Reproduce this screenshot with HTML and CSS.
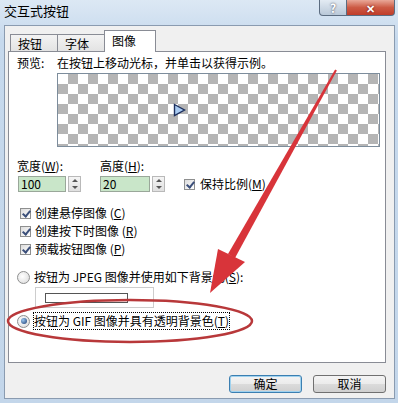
FILE: index.html
```html
<!DOCTYPE html>
<html lang="zh-CN">
<head>
    <meta charset="UTF-8">
    <title>交互式按钮</title>
    <link rel="stylesheet" href="styles.css">
</head>
<body>

<div class="window">
    <div class="titlebar">
        <span class="title">交互式按钮</span>
        <div class="caption-btns">
            <span class="cap-help">?</span>
            <span class="cap-close">✕</span>
        </div>
    </div>

    <div class="client">
        <div class="tabs">
            <span class="tab">按钮</span>
            <span class="tab">字体</span>
            <span class="tab active">图像</span>
        </div>

        <div class="panel">
            <div class="preview-label">
                <span class="lbl">预览:</span>
                <span>在按钮上移动光标，并单击以获得示例。</span>
            </div>
            <div class="checker">
                <svg class="play" width="13" height="14" viewBox="0 0 13 14">
                    <polygon points="1.5,1.5 11.5,7 1.5,12.5" fill="#a9cbf2" stroke="#1c2f5e" stroke-width="1.4"/>
                </svg>
            </div>

            <div class="size-labels">
                <span class="size-lbl">宽度(<u>W</u>):</span>
                <span class="size-lbl">高度(<u>H</u>):</span>
            </div>
            <div class="size-row">
                <div class="field">
                    <span class="num w1">100</span>
                    <span class="spin"><i class="up"></i><i class="down"></i></span>
                </div>
                <div class="field f2">
                    <span class="num w2">20</span>
                    <span class="spin"><i class="up"></i><i class="down"></i></span>
                </div>
                <label class="check keep"><span class="box on"></span>保持比例(<u>M</u>)</label>
            </div>

            <div class="checks">
                <label class="check"><span class="box on"></span>创建悬停图像 (<u>C</u>)</label>
                <label class="check"><span class="box on"></span>创建按下时图像 (<u>R</u>)</label>
                <label class="check"><span class="box on"></span>预载按钮图像 (<u>P</u>)</label>
            </div>

            <label class="radio r1"><span class="dot"></span>按钮为 JPEG 图像并使用如下背景色(<u>S</u>):</label>
            <div class="color-group"><span class="swatch"></span></div>
            <label class="radio r2"><span class="dot on"></span><span class="focus">按钮为 GIF 图像并具有透明背景色(<u>T</u>)</span></label>
        </div>

        <div class="actions">
            <button class="btn default">确定</button>
            <button class="btn">取消</button>
        </div>
    </div>

    <svg class="annotation" width="398" height="403" viewBox="0 0 398 403">
        <polygon points="336.9,70.5 335.1,69.5 228,254 235,258" fill="#d8343a"/>
        <polygon points="218,249 245,262 210,293" fill="#d8343a"/>
        <ellipse cx="130" cy="321" rx="122" ry="21" fill="none" stroke="#b8383a" stroke-width="2.5"/>
    </svg>
</div>

</body>
</html>
```

FILE: styles.css
```css
body {
    margin: 0;
    font-family: "Noto Sans CJK SC", "Noto Sans", sans-serif;
    font-size: 12px;
    color: #000;
    background: #fff;
}
.window {
    position: relative;
    width: 398px;
    height: 403px;
    background: linear-gradient(#dce8f4, #c6d9ed 40px, #c3d6ea);
    overflow: hidden;
}
.titlebar {
    height: 25px;
    display: flex;
    justify-content: space-between;
}
.title {
    padding: 3px 0 0 4px;
    font-size: 13px;
    line-height: 16px;
}
.caption-btns {
    display: flex;
    margin-right: 3px;
    height: 16px;
}
.cap-help, .cap-close {
    display: flex;
    align-items: center;
    justify-content: center;
    color: #fff;
    font-weight: bold;
    border: 1px solid #5b6c80;
    border-top: none;
}
.cap-help {
    width: 26px;
    background: linear-gradient(#e3ebf3, #b9c8d8);
    border-radius: 0 0 0 4px;
    text-shadow: 0 0 2px #334;
    font-size: 12px;
}
.cap-close {
    width: 47px;
    background: linear-gradient(#e9a898, #cc5a44 50%, #c03d2a);
    border-left: none;
    border-radius: 0 0 4px 0;
    text-shadow: 0 0 2px #600;
    font-size: 11px;
}
.client {
    margin: 0 3px 0 4px;
    height: 374px;
    box-sizing: border-box;
    background: #f0f0f0;
    border: 1px solid #8a9bb0;
    padding: 4px 8px 0 3px;
}
.tabs {
    display: flex;
    align-items: flex-end;
    height: 21px;
    padding-left: 2px;
    position: relative;
    z-index: 1;
}
.tab {
    height: 17px;
    box-sizing: border-box;
    padding: 1px 0 0 7px;
    line-height: 16px;
    width: 48px;
    border: 1px solid #898c95;
    border-bottom: none;
    background: linear-gradient(#f3f3f3, #e3e3e3);
    margin-right: -1px;
}
.tab:nth-child(2) {
    width: 48px;
}
.tab.active {
    height: 22px;
    width: 52px;
    padding-top: 2px;
    background: #fff;
    margin-bottom: -1px;
}
.panel {
    height: 312px;
    box-sizing: border-box;
    border: 1px solid #898c95;
    background: #fff;
    padding: 0 0 0 8px;
}
.preview-label {
    display: flex;
    margin-top: 3px;
    line-height: 16px;
}
.lbl {
    width: 40px;
}
.checker {
    margin: 2px 0 0 40px;
    width: 323px;
    height: 74px;
    box-sizing: border-box;
    border: 1px solid #7d8d9c;
    background-color: #fff;
    background-image: conic-gradient(#b5b5b5 25%, #fff 0 50%, #b5b5b5 0 75%, #fff 0);
    background-size: 20px 20px;
    position: relative;
}
.play {
    position: absolute;
    left: 115px;
    top: 29px;
}
.size-labels {
    display: flex;
    margin-top: 11px;
    line-height: 16px;
}
.size-lbl {
    width: 83px;
}
.size-row {
    display: flex;
    align-items: center;
    margin-top: 2px;
    height: 16px;
}
.field {
    display: flex;
    width: 83px;
    gap: 2px;
}
.field.f2 {
    width: 84px;
}
.num {
    height: 16px;
    box-sizing: border-box;
    border: 1px solid #9aa79a;
    background: #c9e6c9;
    padding-left: 2px;
    line-height: 14px;
}
.num.w1 {
    width: 48px;
    margin-left: 1px;
}
.num.w2 {
    width: 50px;
}
.spin {
    width: 13px;
    height: 16px;
    box-sizing: border-box;
    border: 1px solid #b9b9b9;
    background: linear-gradient(#f5f5f5, #e0e0e0);
    display: flex;
    flex-direction: column;
    align-items: center;
    justify-content: space-around;
}
.spin i {
    width: 0;
    height: 0;
    border-left: 3px solid transparent;
    border-right: 3px solid transparent;
}
.spin .up {
    border-bottom: 3px solid #555;
}
.spin .down {
    border-top: 3px solid #555;
}
.check, .radio {
    display: flex;
    align-items: center;
    line-height: 18px;
    height: 18px;
}
.box {
    width: 11px;
    height: 11px;
    box-sizing: border-box;
    border: 1px solid #8e8f8f;
    background: linear-gradient(135deg, #dcdcdc, #fff);
    margin-right: 4px;
    position: relative;
}
.box.on::after {
    content: "";
    position: absolute;
    left: 3px;
    top: 0;
    width: 3px;
    height: 6px;
    border: solid #3b4f7a;
    border-width: 0 2px 2px 0;
    transform: rotate(40deg);
}
.keep .box {
    margin-right: 5px;
}
.checks {
    margin-top: 12px;
}
.checks .check {
    padding-left: 3px;
}
.radio.r1 {
    margin-top: 10px;
}
.dot {
    width: 13px;
    height: 13px;
    box-sizing: border-box;
    border-radius: 50%;
    border: 1px solid #8e8f8f;
    background: radial-gradient(circle at 40% 40%, #fff, #d8d8d8);
    margin-right: 4px;
    position: relative;
}
.dot.on::after {
    content: "";
    position: absolute;
    left: 2.5px;
    top: 2.5px;
    width: 6px;
    height: 6px;
    border-radius: 50%;
    background: radial-gradient(circle at 35% 35%, #9cc7f0, #17386e);
}
.color-group {
    margin: 1px 0 0 18px;
    width: 119px;
    height: 21px;
    box-sizing: border-box;
    border: 1px solid #cdcdcd;
    padding: 5px 0 0 9px;
}
.swatch {
    display: block;
    width: 83px;
    height: 10px;
    box-sizing: border-box;
    border: 1px solid #555;
    background: #fff;
}
.radio.r2 {
    margin-top: 4px;
}
.focus {
    outline: 1px dotted #000;
    line-height: 16px;
}
.actions {
    display: flex;
    justify-content: flex-end;
    gap: 11px;
    margin-top: 12px;
}
.btn {
    width: 73px;
    height: 18px;
    padding: 0;
    font-family: inherit;
    font-size: 12px;
    line-height: 14px;
    border: 1px solid #707070;
    border-radius: 3px;
    background: linear-gradient(#f4f4f4, #ebebeb 50%, #dbdbdb 51%, #cfcfcf);
}
.btn.default {
    border-color: #3c7fb1;
    box-shadow: inset 0 0 0 1px #9fd2ef;
}
.annotation {
    position: absolute;
    left: 0;
    top: 0;
    pointer-events: none;
}
```
